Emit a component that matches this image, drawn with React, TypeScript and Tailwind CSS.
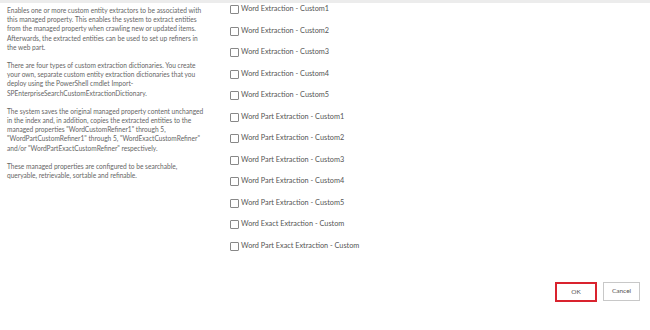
import React from 'react';

const paragraphs = [
    [
        'Enables one or more custom entity extractors to be associated with',
        'this managed property. This enables the system to extract entities',
        'from the managed property when crawling new or updated items.',
        'Afterwards, the extracted entities can be used to set up refiners in',
        'the web part.',
    ],
    [
        'There are four types of custom extraction dictionaries. You create',
        'your own, separate custom entity extraction dictionaries that you',
        'deploy using the PowerShell cmdlet Import-',
        'SPEnterpriseSearchCustomExtractionDictionary.',
    ],
    [
        'The system saves the original managed property content unchanged',
        'in the index and, in addition, copies the extracted entities to the',
        'managed properties "WordCustomRefiner1" through 5,',
        '"WordPartCustomRefiner1" through 5, "WordExactCustomRefiner"',
        'and/or "WordPartExactCustomRefiner" respectively.',
    ],
    [
        'These managed properties are configured to be searchable,',
        'queryable, retrievable, sortable and refinable.',
    ],
];

const options = [
    'Word Extraction - Custom1',
    'Word Extraction - Custom2',
    'Word Extraction - Custom3',
    'Word Extraction - Custom4',
    'Word Extraction - Custom5',
    'Word Part Extraction - Custom1',
    'Word Part Extraction - Custom2',
    'Word Part Extraction - Custom3',
    'Word Part Extraction - Custom4',
    'Word Part Extraction - Custom5',
    'Word Exact Extraction - Custom',
    'Word Part Exact Extraction - Custom',
];

export default function App() {
    return (
        <div className="w-[650px] h-[330px] bg-white overflow-hidden font-['Lato','Liberation_Sans',sans-serif]">
            <div className="h-[3px] bg-[#ececec]" />

            <div className="flex">
                {/* Description */}
                <div className="w-[222px] pl-[7px] pt-[3px] text-[6.6px] leading-[9.2px] text-[#666] flex flex-col gap-[9px]">
                    {paragraphs.map((lines, i) => (
                        <p key={i}>
                            {lines.map((line) => (
                                <span key={line} className="block whitespace-nowrap">{line}</span>
                            ))}
                        </p>
                    ))}
                </div>

                {/* Extractor checkboxes */}
                <div className="pl-[8px] pt-[2px] flex flex-col gap-[12.5px]">
                    {options.map((label) => (
                        <label key={label} className="flex items-center gap-[2px] h-[9px] text-[7.3px] text-[#555] whitespace-nowrap">
                            <span className="w-[9px] h-[9px] border border-[#888] bg-white rounded-[1px]" />
                            <span>{label}</span>
                        </label>
                    ))}
                </div>
            </div>

            {/* Buttons */}
            <div className="flex justify-end gap-[6px] pr-[10px] mt-[31px]">
                <button className="w-[42px] h-[20px] border-2 border-[#d9232e] bg-white text-[6.5px] text-[#555]">OK</button>
                <button className="w-[37px] h-[19px] border border-[#c8c8c8] bg-white text-[6.5px] text-[#555]">Cancel</button>
            </div>
        </div>
    );
}
